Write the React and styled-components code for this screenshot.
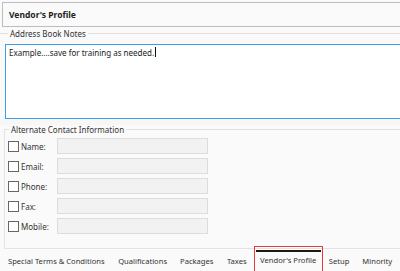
import React from 'react';
import styled, { createGlobalStyle } from 'styled-components';

const Global = createGlobalStyle`
  html, body {
    margin: 0;
    padding: 0;
    background: #fafafa;
    overflow: hidden;
  }
  body {
    font-family: 'Noto Sans', 'DejaVu Sans', sans-serif;
    color: #333;
  }
  *, *::before, *::after {
    box-sizing: border-box;
  }
`;

const Page = styled.div`
  width: 400px;
  height: 271px;
  display: flex;
  flex-direction: column;
  overflow: hidden;
`;

const TitleBar = styled.div`
  margin: 2px -6px 0 2px;
  height: 25px;
  flex: none;
  border: 1px solid #bdbdbd;
  background: #fafafa;
  display: flex;
  align-items: center;
  padding-left: 6px;
  font-size: 8.5px;
  font-weight: 700;
  color: #222;
`;

const Group = styled.fieldset`
  margin: ${(p) => p.$top}px -6px 0 ${(p) => p.$left}px;
  padding: 0;
  border: 1px solid #e3e3e3;
  border-right: none;
  ${(p) => (p.$open ? 'border-bottom: none; border-left: none;' : '')}
  min-width: 0;
  flex: none;
`;

const Legend = styled.legend`
  margin-left: ${(p) => p.$indent}px;
  padding: 0 2px;
  font-size: 8px;
  line-height: 9px;
  color: #333;
`;

const Notes = styled.div`
  margin: 6px 0 0 5px;
  height: 75px;
  border: 1px solid #3c9ce8;
  border-right: none;
  background: #fff;
  padding: 2px 3px;
  font-size: 8px;
  color: #222;
  display: flex;
  align-items: flex-start;
`;

const Caret = styled.span`
  display: inline-block;
  width: 1px;
  height: 10px;
  background: #111;
  margin-left: 1px;
`;

const Band = styled.div`
  height: 6px;
  flex: none;
  background: #f7f7f7;
`;

const Rows = styled.div`
  display: flex;
  flex-direction: column;
  gap: 4px;
  padding: 4px 0 14px 3px;
`;

const Row = styled.div`
  display: flex;
  align-items: center;
  height: 16px;
`;

const Check = styled.span`
  width: 11px;
  height: 11px;
  border: 1px solid #666;
  background: #fff;
  flex: none;
`;

const Label = styled.span`
  width: 36px;
  margin-left: 2px;
  font-size: 8px;
  color: #333;
`;

const Input = styled.div`
  width: 151px;
  height: 16px;
  border: 1px solid #dcdcdc;
  background: #f2f2f2;
`;

const Tabs = styled.div`
  display: flex;
  align-items: stretch;
  flex: 1;
  padding-left: 1px;
`;

const Tab = styled.div`
  position: relative;
  display: flex;
  align-items: center;
  flex: none;
  white-space: nowrap;
  padding: 1px ${(p) => p.$pad}px 0;
  font-size: 7.6px;
  color: #333;
  ${(p) =>
    p.$active &&
    `
    border: 1.5px solid #e53b3b;
    border-bottom: none;
    margin-top: -3px;
    padding-top: 2.5px;
    &::before {
      content: '';
      position: absolute;
      left: 1px;
      right: 1px;
      top: 3px;
      height: 2px;
      background: #1a1a1a;
    }
  `}
`;

const contacts = ['Name:', 'Email:', 'Phone:', 'Fax:', 'Mobile:'];
const tabs = [
  { label: 'Special Terms & Conditions', pad: 7 },
  { label: 'Qualifications', pad: 6.5 },
  { label: 'Packages', pad: 6.5 },
  { label: 'Taxes', pad: 7 },
  { label: "Vendor's Profile", pad: 5.5, active: true },
  { label: 'Setup', pad: 6 },
  { label: 'Minority', pad: 7 },
];

export default function App() {
  return (
    <Page>
      <Global />
      <TitleBar>Vendor's Profile</TitleBar>
      <Group $top={2} $left={0} $open>
        <Legend $indent={8}>Address Book Notes</Legend>
        <Notes>
          Example....save for training as needed.
          <Caret />
        </Notes>
      </Group>
      <Band />
      <Group $top={0} $left={4}>
        <Legend $indent={4}>Alternate Contact Information</Legend>
        <Rows>
          {contacts.map((c) => (
            <Row key={c}>
              <Check />
              <Label>{c}</Label>
              <Input />
            </Row>
          ))}
        </Rows>
      </Group>
      <Tabs>
        {tabs.map((t) => (
          <Tab key={t.label} $pad={t.pad} $active={t.active}>
            {t.label}
          </Tab>
        ))}
      </Tabs>
    </Page>
  );
}
